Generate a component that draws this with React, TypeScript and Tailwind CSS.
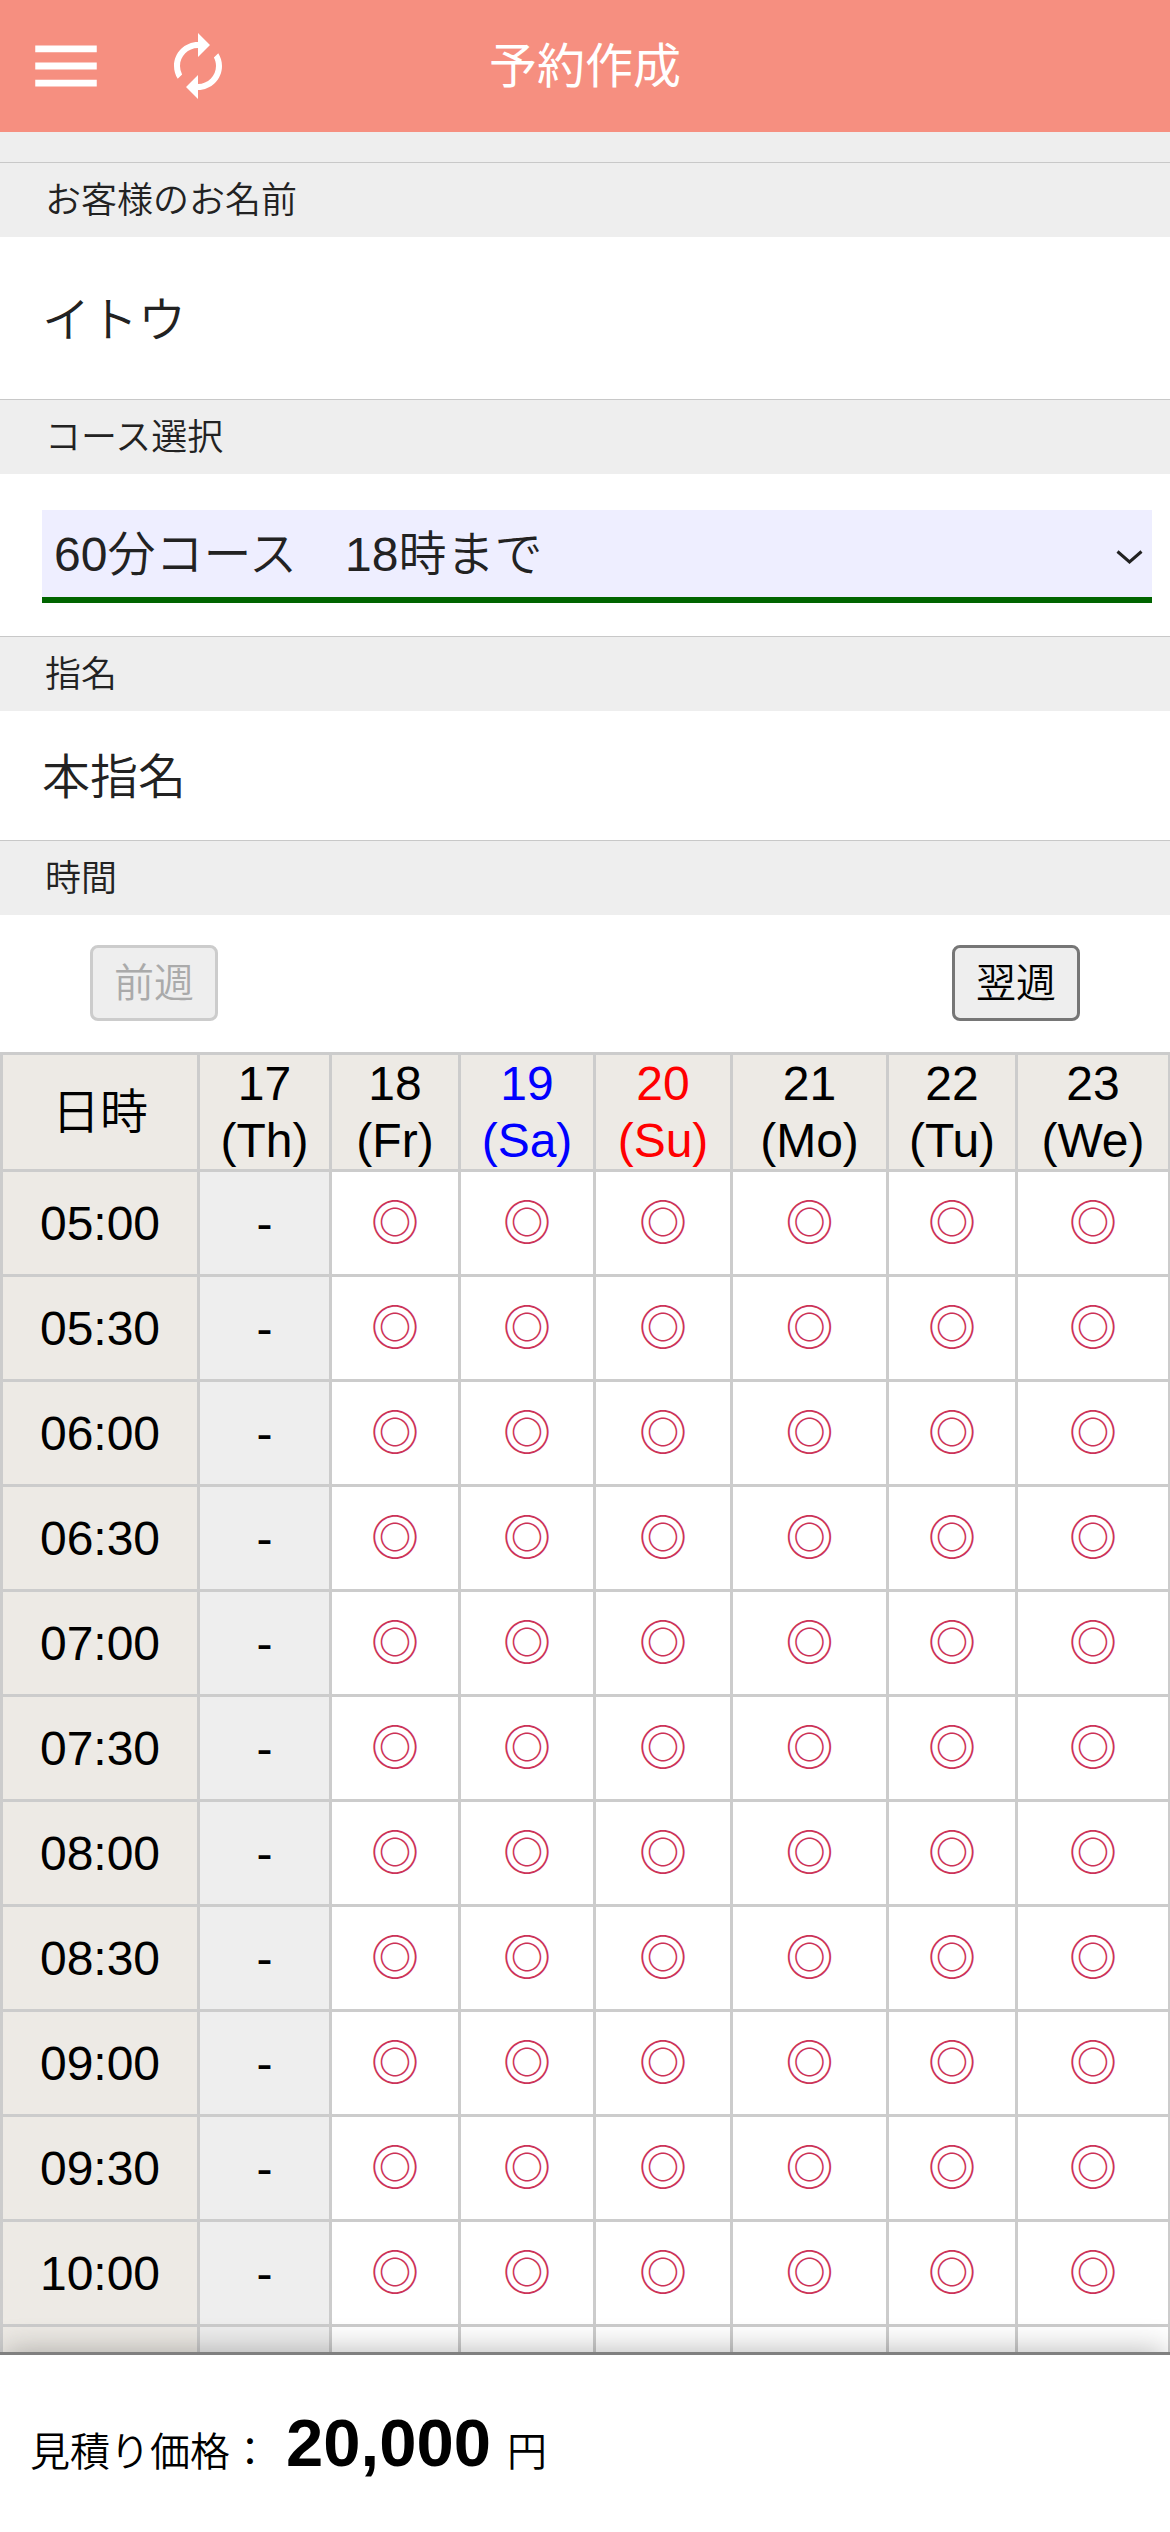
import React, { useState } from 'react';
import { MdAutorenew, MdMenu } from 'react-icons/md';

const days = [
  { date: 17, label: 'Th', col: 'w-[132px]', color: 'text-black', open: false },
  { date: 18, label: 'Fr', col: 'w-[129px]', color: 'text-black', open: true },
  { date: 19, label: 'Sa', col: 'w-[135px]', color: 'text-[#0000ff]', open: true },
  { date: 20, label: 'Su', col: 'w-[137px]', color: 'text-[#ff0000]', open: true },
  { date: 21, label: 'Mo', col: 'w-[156px]', color: 'text-black', open: true },
  { date: 22, label: 'Tu', col: 'w-[129px]', color: 'text-black', open: true },
  { date: 23, label: 'We', col: 'w-[153px]', color: 'text-black', open: true },
];

const times = [
  '05:00', '05:30', '06:00', '06:30', '07:00', '07:30',
  '08:00', '08:30', '09:00', '09:30', '10:00',
];

const courses = ['60分コース　18時まで', '90分コース　18時まで', '120分コース　18時まで'];

const SectionLabel: React.FC<{ children: React.ReactNode; htmlFor?: string }> = ({ children, htmlFor }) => (
  <div className="flex h-[75px] items-center border-t border-[#c8c8c8] bg-[#eeeeee] px-[45px] pt-0.5 text-[36px] leading-[54px]">
    {htmlFor ? <label htmlFor={htmlFor}>{children}</label> : <h2 className="font-[350]">{children}</h2>}
  </div>
);

const Schedule: React.FC = () => (
  <table className="w-full table-fixed border-collapse text-center text-black">
    <colgroup>
      <col className="w-[197px]" />
      {days.map((day) => (
        <col key={day.date} className={day.col} />
      ))}
    </colgroup>
    <thead>
      <tr className="h-[117px] bg-[#edeae5]">
        <th className="border-3 border-[#cccccc] p-0 font-[350]">日時</th>
        {days.map((day) => (
          <th key={day.date} className={`border-3 border-[#cccccc] p-0 font-[350] ${day.color}`}>
            {day.date}
            <br />({day.label})
          </th>
        ))}
      </tr>
    </thead>
    <tbody>
      {times.map((time) => (
        <tr key={time} className="h-[105px]">
          <th className="border-3 border-[#cccccc] bg-[#edeae5] p-0 font-[350]">{time}</th>
          {days.map((day) =>
            day.open ? (
              <td key={day.date} className="border-3 border-[#cccccc] bg-white p-0">
                <button type="button" className="w-full font-normal text-[#cc3358]">◎</button>
              </td>
            ) : (
              <td key={day.date} className="border-3 border-[#cccccc] bg-[#eeeeee] p-0">-</td>
            )
          )}
        </tr>
      ))}
      {/* closing row */}
      <tr className="h-[105px]">
        <td className="border-3 border-[#cccccc] bg-[#edeae5]" />
        {days.map((day) => (
          <td key={day.date} className={`border-3 border-[#cccccc] ${day.open ? 'bg-white' : 'bg-[#eeeeee]'}`} />
        ))}
      </tr>
    </tbody>
  </table>
);

export default function App() {
  const [course, setCourse] = useState(courses[0]);

  return (
    <div className="flex h-screen flex-col bg-[#eeeeee] font-['Liberation_Sans','Noto_Sans_CJK_JP',sans-serif] text-[48px] leading-[57px] font-[350] text-[#222222]">
      {/* Header */}
      <header className="grid h-[132px] shrink-0 grid-cols-[1fr_auto_1fr] items-center bg-[#f68f80] px-[25px] text-white">
        <div className="flex items-center gap-[55px]">
          <button type="button" aria-label="メニュー">
            <MdMenu className="size-[82px]" />
          </button>
          <button type="button" aria-label="更新">
            <MdAutorenew className="size-[72px]" />
          </button>
        </div>
        <h1 className="font-normal">予約作成</h1>
      </header>

      {/* Form */}
      <main className="min-h-0 flex-1 overflow-y-auto pt-[30px] [scrollbar-width:none]">
        <SectionLabel>お客様のお名前</SectionLabel>
        <div className="flex h-[162px] items-center bg-white px-[42px] pt-1">イトウ</div>

        <SectionLabel htmlFor="course">コース選択</SectionLabel>
        <div className="bg-white pt-9 pr-[18px] pb-[33px] pl-[42px]">
          <div className="relative">
            <select
              id="course"
              value={course}
              onChange={(e) => setCourse(e.target.value)}
              className="block h-[93px] w-full appearance-none rounded-none border-b-6 border-[#006400] bg-[#eeeeff] px-3 pt-0.5 outline-none"
            >
              {courses.map((c) => (
                <option key={c}>{c}</option>
              ))}
            </select>
            <svg
              className="pointer-events-none absolute top-[39px] right-[9px] h-4 w-[27px]"
              viewBox="0 0 27 16"
              fill="none"
              stroke="#222222"
              strokeWidth="3"
            >
              <path d="M1.5 2.5 13.5 13 25.5 2.5" />
            </svg>
          </div>
        </div>

        <SectionLabel>指名</SectionLabel>
        <div className="flex h-[129px] items-center bg-white px-[42px] pt-1">本指名</div>

        <SectionLabel>時間</SectionLabel>
        <div className="flex justify-between bg-white px-[90px] pt-[30px] pb-[31px] text-[40px]">
          <button
            type="button"
            disabled
            className="h-[76px] w-32 rounded-lg border-3 border-[#cccccc] bg-[#eeeeee] text-[#aaaaaa]"
          >
            前週
          </button>
          <button
            type="button"
            className="h-[76px] w-32 rounded-lg border-3 border-[#767676] bg-[#eeeeee] text-black"
          >
            翌週
          </button>
        </div>
        <Schedule />
      </main>

      {/* Price */}
      <footer className="z-10 flex h-[180px] shrink-0 items-center border-t-3 border-[#808080] bg-white px-[30px] pt-2 text-[40px] text-black shadow-[0_-4px_30px_-4px_rgba(0,0,0,0.3)]">
        <p className="flex items-baseline">
          見積り価格：
          <strong className="mx-4 text-[67px] font-bold">20,000</strong>
          円
        </p>
      </footer>
    </div>
  );
}
